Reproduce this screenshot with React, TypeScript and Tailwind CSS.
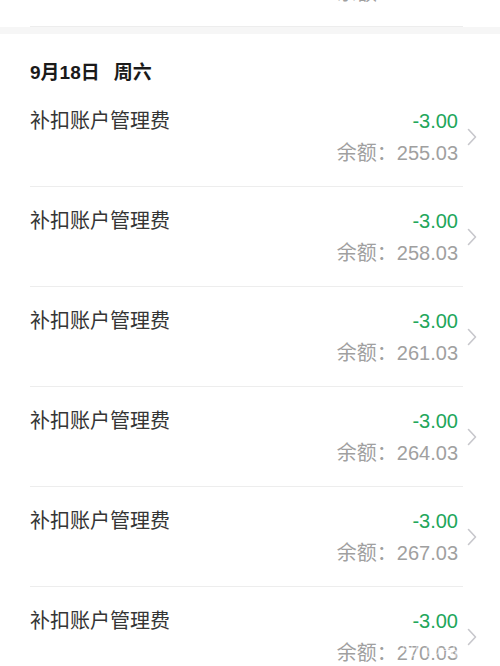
import React from "react";

const font = { fontFamily: '"Liberation Sans", "Noto Sans CJK SC", sans-serif' };

function Chevron() {
  return (
    <svg width="10" height="18" viewBox="0 0 10 18" fill="none">
      <path d="M1.5 1.5 L8.5 9 L1.5 16.5" stroke="#c7c7cc" strokeWidth="1.6" strokeLinecap="round" strokeLinejoin="round" />
    </svg>
  );
}

function Row({ balance }: { balance: string }) {
  return (
    <div className="flex h-[100px] pl-[30px]">
      <div className="flex-1 border-b border-[#ededed] pt-[22px] pr-[5px]">
        <div className="flex justify-between text-[20px] leading-[24px]">
          <span className="text-[#353535]">补扣账户管理费</span>
          <span className="text-[#21a65a]">-3.00</span>
        </div>
        <div className="mt-[8px] text-right text-[20px] leading-[24px] text-[#a0a0a0]">
          余额：{balance}
        </div>
      </div>
      <div className="flex w-[37px] items-center justify-start pl-[4px]">
        <Chevron />
      </div>
    </div>
  );
}

export default function App() {
  const balances = ["255.03", "258.03", "261.03", "264.03", "267.03", "270.03"];
  return (
    <div className="relative h-[666px] w-[500px] overflow-hidden bg-white" style={font}>
      <div className="-mt-[73px] bg-white">
        <Row balance="252.03" />
      </div>
      <div className="h-[7px] bg-[#f6f6f6]" />
      <div className="bg-white">
        <div className="flex h-[53px] gap-[14px] pl-[30px] pt-[27px] text-[19px] font-bold leading-[24px] text-[#1a1a1a]">
          <span>9月18日</span>
          <span>周六</span>
        </div>
        {balances.map((b) => (
          <Row key={b} balance={b} />
        ))}
      </div>
      <div className="pointer-events-none absolute left-[402px] top-[641px] text-[17px] leading-[20px] text-white/60">
        知 @高小紫鹭
      </div>
    </div>
  );
}
